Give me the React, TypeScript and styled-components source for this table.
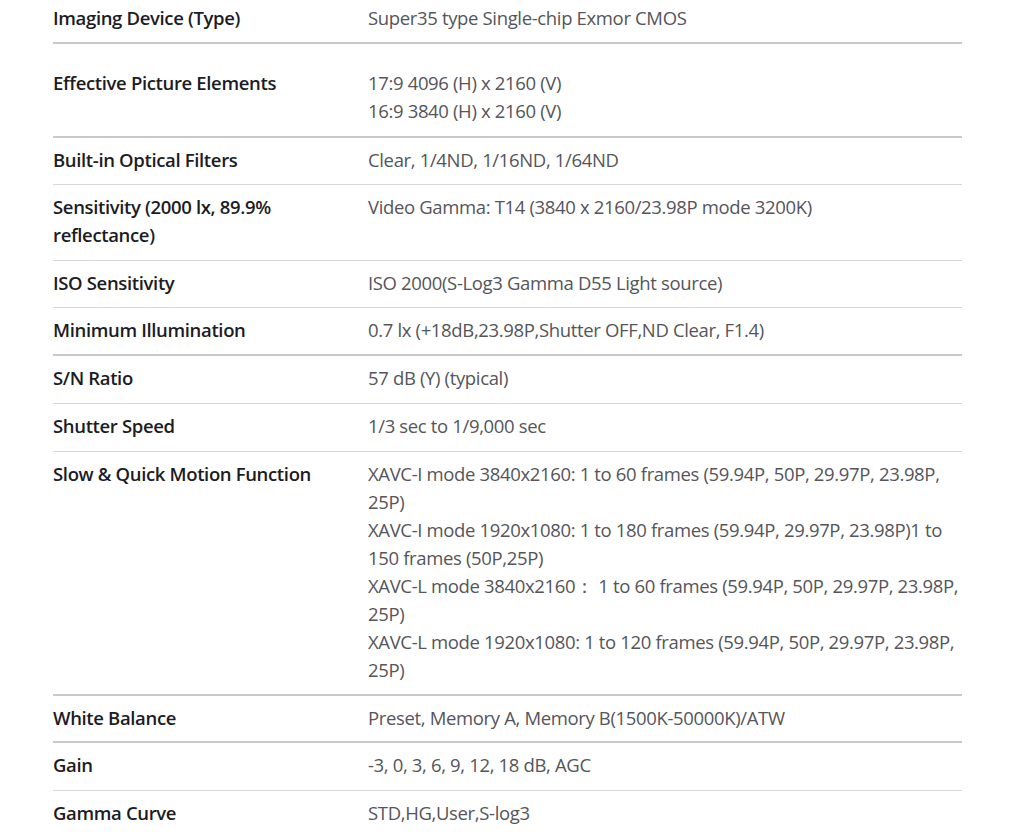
import React from "react";
import styled, { createGlobalStyle } from "styled-components";

const Global = createGlobalStyle`
  html, body { margin: 0; padding: 0; background: #ffffff; }
  body { font-family: "Open Sans", "Liberation Sans", sans-serif; }
`;

const Table = styled.div`
  margin-left: 53px;
  width: 909px;
  display: flex;
  flex-direction: column;
`;

const Row = styled.div<{ $top: number; $bottom: number; $border: number }>`
  display: grid;
  grid-template-columns: 315px 1fr;
  padding: ${(p) => p.$top}px 0 ${(p) => p.$bottom}px 0;
  border-bottom: ${(p) =>
    p.$border === 0 ? "none" : p.$border === 2 ? "2px solid #c9c9c9" : "1px solid #d6d6d6"};
`;

const Label = styled.div`
  font-size: 18.5px;
  line-height: 28px;
  font-weight: 600;
  color: #1c1c24;
  letter-spacing: -0.35px;
  padding-right: 40px;
`;

const Value = styled.div`
  font-size: 18.5px;
  line-height: 28px;
  font-weight: 400;
  color: #55555a;
  letter-spacing: -0.35px;
`;

type Spec = { label: string; value: string[]; top?: number; bottom?: number; border?: number };

const specs: Spec[] = [
  { label: "Imaging Device (Type)", value: ["Super35 type Single-chip Exmor CMOS"], top: 4, border: 2 },
  { label: "Effective Picture Elements", value: ["17:9 4096 (H) x 2160 (V)", "16:9 3840 (H) x 2160 (V)"], top: 25, bottom: 11, border: 2 },
  { label: "Built-in Optical Filters", value: ["Clear, 1/4ND, 1/16ND, 1/64ND"], bottom: 10 },
  { label: "Sensitivity (2000 lx, 89.9% reflectance)", value: ["Video Gamma: T14 (3840 x 2160/23.98P mode 3200K)"] },
  { label: "ISO Sensitivity", value: ["ISO 2000(S-Log3 Gamma D55 Light source)"], bottom: 10 },
  { label: "Minimum Illumination", value: ["0.7 lx (+18dB,23.98P,Shutter OFF,ND Clear, F1.4)"], border: 2 },
  { label: "S/N Ratio", value: ["57 dB (Y) (typical)"] },
  { label: "Shutter Speed", value: ["1/3 sec to 1/9,000 sec"] },
  {
    label: "Slow & Quick Motion Function",
    value: [
      "XAVC-I mode 3840x2160: 1 to 60 frames (59.94P, 50P, 29.97P, 23.98P, 25P)",
      "XAVC-I mode 1920x1080: 1 to 180 frames (59.94P, 29.97P, 23.98P)1 to 150 frames (50P,25P)",
      "XAVC-L mode 3840x2160\uFF1A 1 to 60 frames (59.94P, 50P, 29.97P, 23.98P, 25P)",
      "XAVC-L mode 1920x1080: 1 to 120 frames (59.94P, 50P, 29.97P, 23.98P, 25P)",
    ],
    border: 2,
  },
  { label: "White Balance", value: ["Preset, Memory A, Memory B(1500K-50000K)/ATW"], bottom: 9, border: 2 },
  { label: "Gain", value: ["-3, 0, 3, 6, 9, 12, 18 dB, AGC"] },
  { label: "Gamma Curve", value: ["STD,HG,User,S-log3"], border: 0 },
];

export default function App() {
  return (
    <>
      <Global />
      <Table>
        {specs.map((s) => {
          const border = s.border ?? 1;
          return (
            <Row key={s.label} $top={s.top ?? 8} $bottom={s.bottom ?? 12 - border} $border={border}>
              <Label>{s.label}</Label>
              <Value>
                {s.value.map((v) => (
                  <div key={v}>{v}</div>
                ))}
              </Value>
            </Row>
          );
        })}
      </Table>
    </>
  );
}
